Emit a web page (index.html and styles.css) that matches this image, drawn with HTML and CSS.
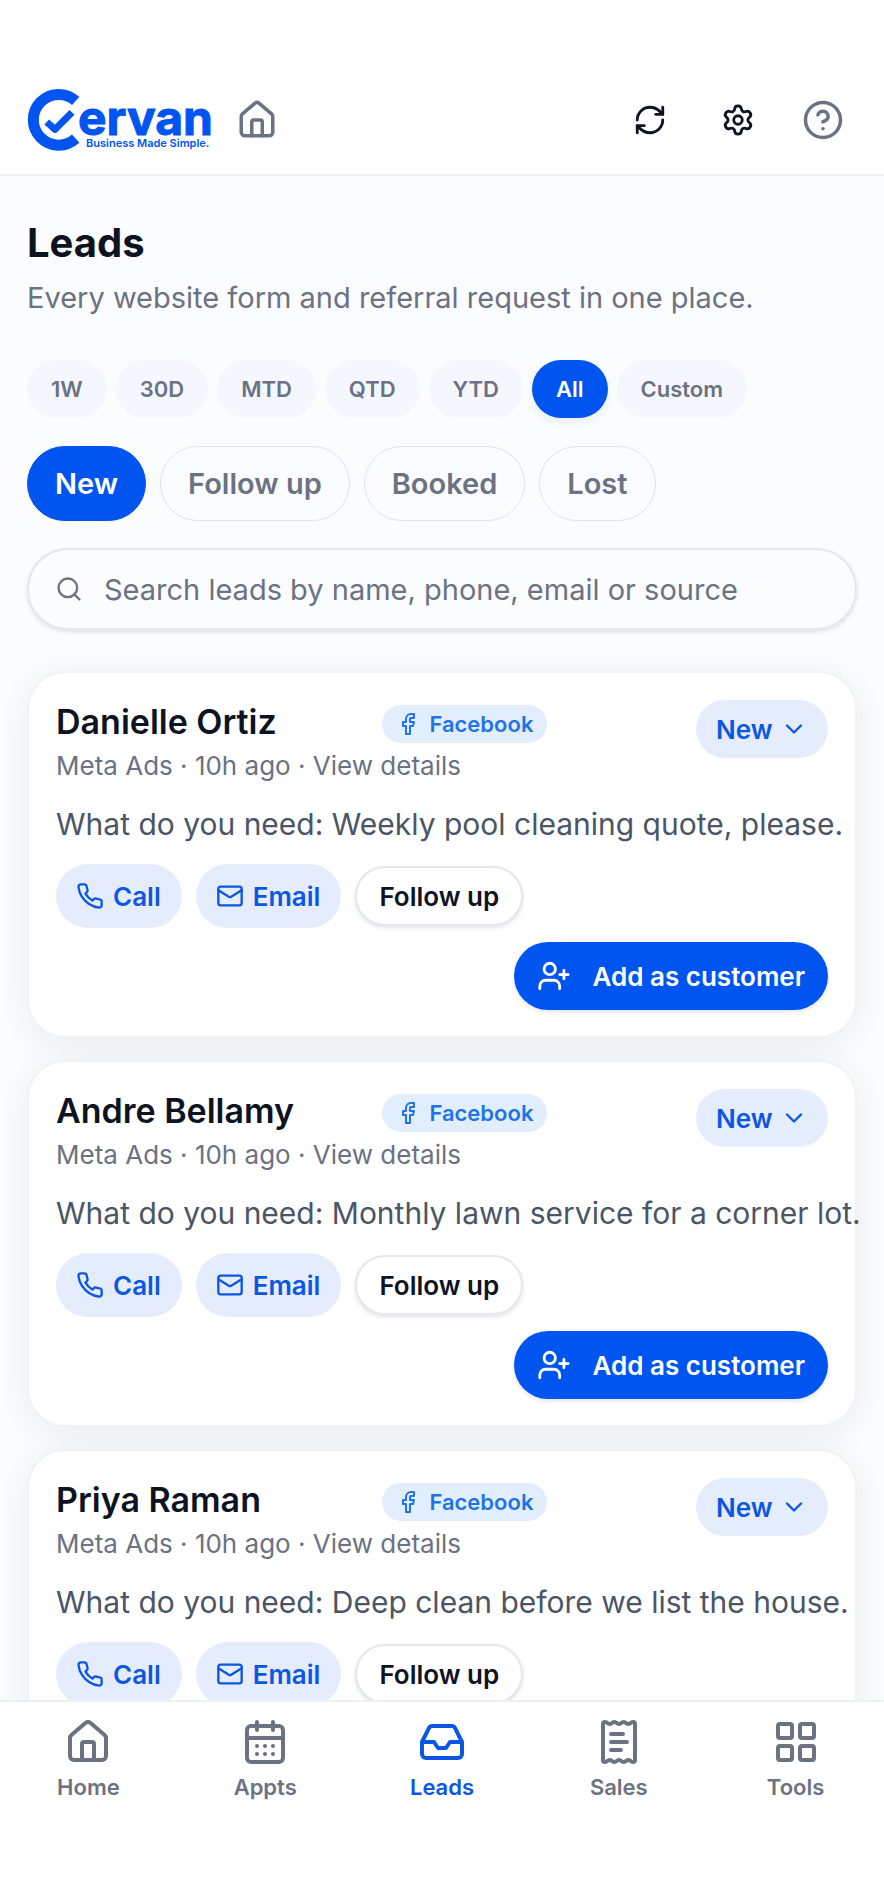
FILE: index.html
```html
<!DOCTYPE html>
<html lang="en">
<head>
<meta charset="utf-8">
<meta name="viewport" content="width=device-width, initial-scale=1">
<title>Leads – Cervan</title>
<link rel="stylesheet" href="styles.css">
</head>
<body>
<svg class="sprite" aria-hidden="true">
  <symbol id="i-home" viewBox="0 0 24 24"><path d="M15 21v-8a1 1 0 0 0-1-1h-4a1 1 0 0 0-1 1v8"/><path d="M3 10a2 2 0 0 1 .709-1.528l7-5.999a2 2 0 0 1 2.582 0l7 5.999A2 2 0 0 1 21 10v9a2 2 0 0 1-2 2H5a2 2 0 0 1-2-2z"/></symbol>
  <symbol id="i-refresh" viewBox="0 0 24 24"><path d="M3 12a9 9 0 0 1 9-9 9.75 9.75 0 0 1 6.74 2.74L21 8"/><path d="M21 3v5h-5"/><path d="M21 12a9 9 0 0 1-9 9 9.75 9.75 0 0 1-6.74-2.74L3 16"/><path d="M8 16H3v5"/></symbol>
  <symbol id="i-settings" viewBox="0 0 24 24"><path d="M9.671 4.136a2.34 2.34 0 0 1 4.659 0 2.34 2.34 0 0 0 3.319 1.915 2.34 2.34 0 0 1 2.33 4.033 2.34 2.34 0 0 0 0 3.831 2.34 2.34 0 0 1-2.33 4.033 2.34 2.34 0 0 0-3.319 1.915 2.34 2.34 0 0 1-4.659 0 2.34 2.34 0 0 0-3.32-1.915 2.34 2.34 0 0 1-2.33-4.033 2.34 2.34 0 0 0 0-3.831A2.34 2.34 0 0 1 6.35 6.051a2.34 2.34 0 0 0 3.319-1.915"/><circle cx="12" cy="12" r="3"/></symbol>
  <symbol id="i-help" viewBox="0 0 24 24"><circle cx="12" cy="12" r="10"/><path d="M9.09 9a3 3 0 0 1 5.83 1c0 2-3 3-3 3"/><path d="M12 17h.01"/></symbol>
  <symbol id="i-search" viewBox="0 0 24 24"><circle cx="11" cy="11" r="8"/><path d="m21 21-4.34-4.34"/></symbol>
  <symbol id="i-facebook" viewBox="0 0 24 24"><path d="M18 2h-3a5 5 0 0 0-5 5v3H7v4h3v8h4v-8h3l1-4h-4V7a1 1 0 0 1 1-1h3z"/></symbol>
  <symbol id="i-chevron" viewBox="0 0 24 24"><path d="m6 9 6 6 6-6"/></symbol>
  <symbol id="i-phone" viewBox="0 0 24 24"><path d="M22 16.92v3a2 2 0 0 1-2.18 2 19.79 19.79 0 0 1-8.63-3.07 19.5 19.5 0 0 1-6-6 19.79 19.79 0 0 1-3.07-8.67A2 2 0 0 1 4.11 2h3a2 2 0 0 1 2 1.72 12.84 12.84 0 0 0 .7 2.81 2 2 0 0 1-.45 2.11L8.09 9.91a16 16 0 0 0 6 6l1.27-1.27a2 2 0 0 1 2.11-.45 12.84 12.84 0 0 0 2.81.7A2 2 0 0 1 22 16.92z"/></symbol>
  <symbol id="i-mail" viewBox="0 0 24 24"><path d="m22 7-8.991 5.727a2 2 0 0 1-2.009 0L2 7"/><rect x="2" y="4" width="20" height="16" rx="2"/></symbol>
  <symbol id="i-user-plus" viewBox="0 0 24 24"><path d="M16 21v-2a4 4 0 0 0-4-4H6a4 4 0 0 0-4 4v2"/><circle cx="9" cy="7" r="4"/><path d="M19 8v6M22 11h-6"/></symbol>
  <symbol id="i-calendar" viewBox="0 0 24 24"><path d="M8 2v4M16 2v4"/><rect x="3" y="4" width="18" height="18" rx="2"/><path d="M3 10h18M8 14h.01M12 14h.01M16 14h.01M8 18h.01M12 18h.01M16 18h.01"/></symbol>
  <symbol id="i-inbox" viewBox="0 0 24 24"><path d="M22 12h-6l-2 3h-4l-2-3H2"/><path d="M5.45 5.11 2 12v6a2 2 0 0 0 2 2h16a2 2 0 0 0 2-2v-6l-3.45-6.89A2 2 0 0 0 16.76 4H7.24a2 2 0 0 0-1.79 1.11z"/></symbol>
  <symbol id="i-receipt" viewBox="0 0 24 24"><path d="M13 16H8M14 8H8M16 12H8"/><path d="M4 3a1 1 0 0 1 1-1 1.3 1.3 0 0 1 .7.2l.933.6a1.3 1.3 0 0 0 1.4 0l.934-.6a1.3 1.3 0 0 1 1.4 0l.933.6a1.3 1.3 0 0 0 1.4 0l.933-.6a1.3 1.3 0 0 1 1.4 0l.934.6a1.3 1.3 0 0 0 1.4 0l.933-.6A1.3 1.3 0 0 1 19 2a1 1 0 0 1 1 1v18a1 1 0 0 1-1 1 1.3 1.3 0 0 1-.7-.2l-.933-.6a1.3 1.3 0 0 0-1.4 0l-.934.6a1.3 1.3 0 0 1-1.4 0l-.933-.6a1.3 1.3 0 0 0-1.4 0l-.933.6a1.3 1.3 0 0 1-1.4 0l-.934-.6a1.3 1.3 0 0 0-1.4 0l-.933.6a1.3 1.3 0 0 1-.7.2 1 1 0 0 1-1-1z"/></symbol>
  <symbol id="i-grid" viewBox="0 0 24 24"><rect x="3" y="3" width="7" height="7" rx="1"/><rect x="14" y="3" width="7" height="7" rx="1"/><rect x="14" y="14" width="7" height="7" rx="1"/><rect x="3" y="14" width="7" height="7" rx="1"/></symbol>
</svg>

<div class="app">
  <header class="topbar">
    <svg class="logo" viewBox="0 0 184 62" role="img" aria-label="Cervan. Business Made Simple.">
      <path class="logo-ring" d="M47.7 11.9A25.4 25.4 0 1 0 47.7 49.7"/>
      <path class="logo-check" d="M18.7 33 27 40.4 44 23.4"/>
      <text class="logo-name" x="50" y="46">ervan</text>
      <text class="logo-tag" x="58" y="58">Business Made Simple.</text>
    </svg>
    <a class="home-link" href="#" aria-label="Home"><svg class="icon icon-l"><use href="#i-home"/></svg></a>
    <div class="tools">
      <button class="tool" type="button" aria-label="Refresh"><svg class="icon icon-m"><use href="#i-refresh"/></svg></button>
      <button class="tool" type="button" aria-label="Settings"><svg class="icon icon-m"><use href="#i-settings"/></svg></button>
      <button class="tool tool-help" type="button" aria-label="Help"><svg class="icon icon-l"><use href="#i-help"/></svg></button>
    </div>
  </header>

  <main class="content">
    <h1 class="title">Leads</h1>
    <p class="subtitle">Every website form and referral request in one place.</p>

    <div class="ranges" role="group" aria-label="Date range">
      <button class="range" type="button">1W</button>
      <button class="range" type="button">30D</button>
      <button class="range" type="button">MTD</button>
      <button class="range" type="button">QTD</button>
      <button class="range" type="button">YTD</button>
      <button class="range range-on" type="button" aria-pressed="true">All</button>
      <button class="range" type="button">Custom</button>
    </div>

    <div class="statuses" role="group" aria-label="Status">
      <button class="status status-on" type="button" aria-pressed="true">New</button>
      <button class="status" type="button">Follow up</button>
      <button class="status" type="button">Booked</button>
      <button class="status" type="button">Lost</button>
    </div>

    <label class="search">
      <svg class="icon icon-s"><use href="#i-search"/></svg>
      <input class="search-input" type="search" aria-label="Search leads" placeholder="Search leads by name, phone, email or source">
    </label>

    <section class="leads">
      <article class="card">
        <div class="card-head">
          <div class="who">
            <h2 class="name">Danielle Ortiz</h2>
            <span class="badge"><svg class="icon icon-xs"><use href="#i-facebook"/></svg>Facebook</span>
            <p class="meta">Meta Ads · 10h ago · <a class="details" href="#">View details</a></p>
          </div>
          <div class="stage">
            <select class="stage-select" aria-label="Stage for Danielle Ortiz"><option>New</option></select>
            <svg class="icon icon-s stage-arrow"><use href="#i-chevron"/></svg>
          </div>
        </div>
        <p class="need">What do you need: Weekly pool cleaning quote, please.</p>
        <div class="actions">
          <a class="soft" href="#"><svg class="icon icon-s"><use href="#i-phone"/></svg>Call</a>
          <a class="soft" href="#"><svg class="icon icon-s"><use href="#i-mail"/></svg>Email</a>
          <button class="outline" type="button">Follow up</button>
        </div>
        <button class="add" type="button"><svg class="icon icon-m"><use href="#i-user-plus"/></svg>Add as customer</button>
      </article>

      <article class="card">
        <div class="card-head">
          <div class="who">
            <h2 class="name">Andre Bellamy</h2>
            <span class="badge"><svg class="icon icon-xs"><use href="#i-facebook"/></svg>Facebook</span>
            <p class="meta">Meta Ads · 10h ago · <a class="details" href="#">View details</a></p>
          </div>
          <div class="stage">
            <select class="stage-select" aria-label="Stage for Andre Bellamy"><option>New</option></select>
            <svg class="icon icon-s stage-arrow"><use href="#i-chevron"/></svg>
          </div>
        </div>
        <p class="need">What do you need: Monthly lawn service for a corner lot.</p>
        <div class="actions">
          <a class="soft" href="#"><svg class="icon icon-s"><use href="#i-phone"/></svg>Call</a>
          <a class="soft" href="#"><svg class="icon icon-s"><use href="#i-mail"/></svg>Email</a>
          <button class="outline" type="button">Follow up</button>
        </div>
        <button class="add" type="button"><svg class="icon icon-m"><use href="#i-user-plus"/></svg>Add as customer</button>
      </article>

      <article class="card">
        <div class="card-head">
          <div class="who">
            <h2 class="name">Priya Raman</h2>
            <span class="badge"><svg class="icon icon-xs"><use href="#i-facebook"/></svg>Facebook</span>
            <p class="meta">Meta Ads · 10h ago · <a class="details" href="#">View details</a></p>
          </div>
          <div class="stage">
            <select class="stage-select" aria-label="Stage for Priya Raman"><option>New</option></select>
            <svg class="icon icon-s stage-arrow"><use href="#i-chevron"/></svg>
          </div>
        </div>
        <p class="need">What do you need: Deep clean before we list the house.</p>
        <div class="actions">
          <a class="soft" href="#"><svg class="icon icon-s"><use href="#i-phone"/></svg>Call</a>
          <a class="soft" href="#"><svg class="icon icon-s"><use href="#i-mail"/></svg>Email</a>
          <button class="outline" type="button">Follow up</button>
        </div>
        <button class="add" type="button"><svg class="icon icon-m"><use href="#i-user-plus"/></svg>Add as customer</button>
      </article>
    </section>
  </main>

  <nav class="tabs" aria-label="Main">
    <a class="tab" href="#"><svg class="icon icon-xl"><use href="#i-home"/></svg>Home</a>
    <a class="tab" href="#"><svg class="icon icon-xl"><use href="#i-calendar"/></svg>Appts</a>
    <a class="tab tab-on" href="#" aria-current="page"><svg class="icon icon-xl"><use href="#i-inbox"/></svg>Leads</a>
    <a class="tab" href="#"><svg class="icon icon-xl"><use href="#i-receipt"/></svg>Sales</a>
    <a class="tab" href="#"><svg class="icon icon-xl"><use href="#i-grid"/></svg>Tools</a>
  </nav>
</div>
</body>
</html>
```
FILE: styles.css
```css
:root {
  --blue: #0055f0;
  --blue-text: #0b57e3;
  --blue-soft: #e5edfd;
  --ink: #0d1321;
  --body: #4b5565;
  --muted: #6b7282;
  --line: #e4e7ed;
}

* { box-sizing: border-box; }

body {
  margin: 0;
  font-family: Inter, "Liberation Sans", sans-serif;
  color: var(--ink);
  background: #fff;
}

h1, h2, p { margin: 0; }
a { color: inherit; text-decoration: none; }
button, input, select { font: inherit; color: inherit; margin: 0; }
button { border: 0; cursor: pointer; white-space: nowrap; }

.sprite { display: none; }

.icon {
  flex: none;
  fill: none;
  stroke: currentColor;
  stroke-width: 2;
  stroke-linecap: round;
  stroke-linejoin: round;
}
.icon-xs { width: 24px; height: 24px; }
.icon-s { width: 28px; height: 28px; }
.icon-m { width: 34px; height: 34px; }
.icon-l { width: 42px; height: 42px; }
.icon-xl { width: 48px; height: 48px; }

.app {
  display: flex;
  flex-direction: column;
  height: 100vh;
}

/* Top bar */
.topbar {
  display: flex;
  align-items: center;
  padding: 89px 28px 23px;
  border-bottom: 2px solid #eef0f2;
}
.logo { width: 184px; height: 62px; overflow: visible; }
.logo-ring { fill: none; stroke: var(--blue); stroke-width: 11; }
.logo-check { fill: none; stroke: var(--blue); stroke-width: 7; stroke-linejoin: round; }
.logo-name { font-size: 48px; font-weight: 700; fill: var(--blue); stroke: var(--blue); stroke-width: 1; }
.logo-tag { font-size: 11px; font-weight: 600; fill: var(--blue); }
.home-link { display: flex; margin-left: 24px; color: var(--muted); }
.tools { display: flex; gap: 16px; margin-left: auto; }
.tool {
  display: flex;
  align-items: center;
  justify-content: center;
  width: 72px;
  height: 62px;
  padding: 0;
  background: none;
}
.tool-help { width: 66px; color: var(--muted); }

/* Page content */
.content {
  flex: 1;
  min-height: 0;
  padding: 43px 27px 24px;
  overflow: hidden auto;
  scrollbar-width: none;
  background: #fbfcfe;
}
.title { font-size: 40px; line-height: 48px; font-weight: 700; }
.subtitle { margin-top: 11px; font-size: 29px; line-height: 40px; color: var(--muted); }

.ranges { display: flex; gap: 9px; margin-top: 42px; }
.range {
  height: 58px;
  padding: 0 24px;
  border-radius: 29px;
  font-size: 22px;
  font-weight: 600;
  color: var(--muted);
  background: #f5f7fe;
}
.range-on {
  color: #fff;
  background: var(--blue);
  box-shadow: 0 4px 10px rgba(15, 23, 42, .07);
}

.statuses { display: flex; gap: 14px; margin-top: 28px; }
.status {
  height: 75px;
  padding: 0 27px;
  border: 1px solid #dfe3ea;
  border-radius: 38px;
  font-size: 29px;
  font-weight: 600;
  color: var(--muted);
  background: none;
}
.status-on { color: #fff; background: var(--blue); border-color: var(--blue); }

.search {
  display: flex;
  align-items: center;
  gap: 21px;
  height: 82px;
  margin-top: 27px;
  padding: 0 26px;
  border: 2px solid var(--line);
  border-radius: 41px;
  color: var(--muted);
  box-shadow: 0 2px 4px rgba(15, 23, 42, .12);
}
.search-input {
  flex: 1;
  min-width: 0;
  padding: 0;
  border: 0;
  outline: 0;
  font-size: 29px;
  background: none;
}
.search-input::placeholder { color: var(--muted); opacity: 1; }

/* Lead cards */
.leads {
  display: grid;
  grid-template-columns: minmax(0, 1fr);
  gap: 22px;
  margin-top: 41px;
}
.card {
  display: flex;
  flex-direction: column;
  padding: 27px 27px 26px;
  border: 2px solid #f0f2f6;
  border-radius: 38px;
  background: #fff;
  box-shadow: 0 6px 36px rgba(15, 23, 42, .07);
}
.card-head { display: flex; align-items: flex-start; }
.who {
  flex: 1;
  display: grid;
  grid-template-columns: 51% auto;
  align-items: center;
  justify-content: start;
  min-width: 0;
}
.name {
  align-self: start;
  font-size: 34px;
  line-height: 44px;
  font-weight: 600;
  white-space: nowrap;
}
.badge {
  display: flex;
  align-items: center;
  gap: 9px;
  height: 38px;
  margin: 5px 0;
  padding: 0 14px;
  border-radius: 19px;
  font-size: 22px;
  font-weight: 600;
  color: #1f74e8;
  background: #e2eefd;
}
.meta { grid-column: 1 / -1; font-size: 26px; line-height: 36px; color: var(--muted); }
.stage { position: relative; }
.stage-select {
  appearance: none;
  height: 58px;
  padding: 0 55px 0 20px;
  border: 0;
  border-radius: 29px;
  font-size: 26px;
  font-weight: 600;
  color: var(--blue-text);
  background: var(--blue-soft);
}
.stage-arrow {
  position: absolute;
  top: 15px;
  right: 20px;
  color: var(--blue-text);
  pointer-events: none;
}
.need {
  margin-top: 20px;
  font-size: 30px;
  line-height: 40px;
  color: var(--body);
  white-space: nowrap;
}
.actions { display: flex; align-items: center; gap: 14px; margin-top: 20px; }
.soft {
  display: flex;
  align-items: center;
  gap: 9px;
  height: 64px;
  padding: 0 21px 0 20px;
  border-radius: 32px;
  font-size: 26px;
  font-weight: 600;
  color: var(--blue-text);
  background: var(--blue-soft);
}
.outline {
  height: 60px;
  padding: 0 22px;
  border: 2px solid var(--line);
  border-radius: 30px;
  font-size: 26px;
  font-weight: 600;
  background: #fff;
  box-shadow: 0 2px 4px rgba(15, 23, 42, .12);
}
.add {
  display: flex;
  align-items: center;
  align-self: flex-end;
  gap: 22px;
  height: 68px;
  margin-top: 14px;
  padding: 0 23px;
  border-radius: 34px;
  font-size: 26px;
  font-weight: 600;
  color: #fff;
  background: var(--blue);
  box-shadow: 0 2px 4px rgba(15, 23, 42, .12);
}

/* Bottom tabs */
.tabs {
  display: grid;
  grid-template-columns: repeat(5, 1fr);
  padding: 16px 0 78px;
  border-top: 2px solid #eef0f3;
  background: #fff;
}
.tab {
  display: flex;
  flex-direction: column;
  align-items: center;
  gap: 7px;
  font-size: 22px;
  line-height: 28px;
  font-weight: 600;
  color: var(--muted);
}
.tab-on { color: var(--blue-text); }
```
